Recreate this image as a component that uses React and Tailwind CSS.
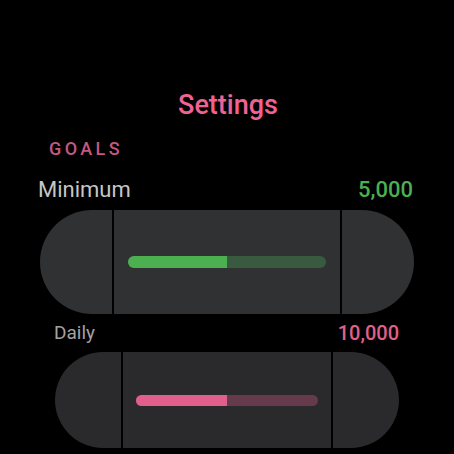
import React from "react";

function Slider({ ml, w, h, side, barW, barH, bg, fill, track }) {
  return (
    <div className={`flex gap-[2px] ${ml} ${w} ${h}`}>
      <div className={`${side} h-full rounded-l-full ${bg}`} />
      <div className={`flex-1 h-full flex items-center justify-center ${bg}`}>
        <div className={`${barW} ${barH} rounded-full overflow-hidden flex ${track}`}>
          <div className={`w-1/2 h-full ${fill}`} />
        </div>
      </div>
      <div className={`${side} h-full rounded-r-full ${bg}`} />
    </div>
  );
}

export default function App() {
  return (
    <div
      className="w-[454px] h-[454px] bg-black overflow-hidden flex flex-col"
      style={{ fontFamily: "Roboto, 'Noto Sans', sans-serif" }}
    >
      <div className="mt-[89px] h-[32px] leading-[32px] text-[27px] font-medium text-[#f06292] text-center pl-[2px]">
        Settings
      </div>
      <div className="mt-[16px] ml-[49px] h-[24px] leading-[24px] text-[18px] font-medium tracking-[3.4px] text-[#c4587f]">
        GOALS
      </div>
      <div className="mt-[16px] ml-[38px] w-[375px] h-[26px] leading-[26px] flex justify-between">
        <span className="text-[22px] text-[#c6c6c6]">Minimum</span>
        <span className="text-[22px] font-medium text-[#4caf50]">5,000</span>
      </div>
      <div className="mt-[7px]">
        <Slider
          ml="ml-[40px]"
          w="w-[374px]"
          h="h-[104px]"
          side="w-[72px]"
          barW="w-[198px]"
          barH="h-[12px]"
          bg="bg-[#303133]"
          fill="bg-[#4caf50]"
          track="bg-[#3a5a3f]"
        />
      </div>
      <div className="mt-[7px] ml-[54px] w-[345px] h-[24px] leading-[24px] flex justify-between">
        <span className="text-[19px] text-[#a3a3a3]">Daily</span>
        <span className="text-[20px] font-medium text-[#e0608b]">10,000</span>
      </div>
      <div className="mt-[7px]">
        <Slider
          ml="ml-[55px]"
          w="w-[344px]"
          h="h-[96px]"
          side="w-[66px]"
          barW="w-[182px]"
          barH="h-[11px]"
          bg="bg-[#2a2a2c]"
          fill="bg-[#e0608b]"
          track="bg-[#653a4d]"
        />
      </div>
    </div>
  );
}
